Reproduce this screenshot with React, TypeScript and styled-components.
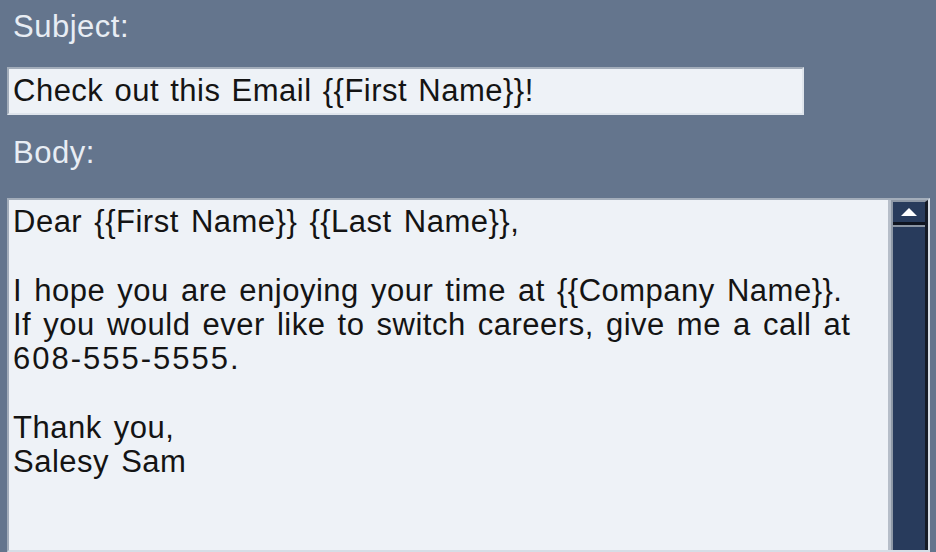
import React from "react";
import styled, { createGlobalStyle } from "styled-components";

const Global = createGlobalStyle`
  html, body { margin: 0; padding: 0; }
  body {
    width: 936px;
    height: 552px;
    overflow: hidden;
    background: #64758d;
    font-family: "Liberation Sans", Arial, sans-serif;
  }
`;

const Page = styled.div`
  width: 936px;
  height: 552px;
  overflow: hidden;
  background: #64758d;
  padding: 10px 6px 0 6px;
  box-sizing: border-box;
  display: flex;
  flex-direction: column;
`;

const Label = styled.div<{ $gap: number }>`
  color: #e8edf4;
  font-size: 31px;
  line-height: 34px;
  letter-spacing: 0.5px;
  padding-left: 7px;
  margin-bottom: ${(p) => p.$gap}px;
`;

const SubjectBox = styled.div`
  width: 797px;
  height: 48px;
  box-sizing: border-box;
  margin-left: 1px;
  margin-bottom: 21px;
  background: #eef2f7;
  border-style: solid;
  border-width: 2px;
  border-color: #a3adba #dfe5ec #dfe5ec #a3adba;
  color: #141414;
  font-size: 31px;
  line-height: 44px;
  letter-spacing: 0.5px;
  word-spacing: 2px;
  padding-left: 4px;
  white-space: nowrap;
`;

const BodyFrame = styled.div`
  width: 923px;
  height: 380px;
  margin-left: 1px;
  box-sizing: border-box;
  display: flex;
  border-style: solid;
  border-width: 2px;
  border-color: #a3adba #d6dde6 #d6dde6 #a3adba;
  background: #eef2f7;
`;

const BodyText = styled.div`
  flex: 1;
  padding: 5px 4px 0 4px;
  color: #141414;
  font-size: 31px;
  line-height: 34.3px;
  letter-spacing: 0.5px;
  word-spacing: 3px;
  white-space: pre-wrap;
  border-right: 3px solid #b6bec9;
`;

const Phone = styled.span`
  white-space: nowrap;
  letter-spacing: 2px;
`;

const ScrollBar = styled.div`
  width: 32px;
  display: flex;
  flex-direction: column;
  background: #283b5c;
  border-top: 2px solid #8e98a6;
  border-left: 2px solid #8e98a6;
  border-right: 3px solid #141a26;
`;

const ArrowButton = styled.div`
  height: 20px;
  display: flex;
  align-items: center;
  justify-content: center;
  background: #283b5c;
  border-bottom: 3px solid #0f1420;
`;

const TrackEdge = styled.div`
  height: 2px;
  background: #8b95a3;
`;

const Track = styled.div`
  flex: 1;
  background: #283b5c;
`;

export default function App() {
  return (
    <>
      <Global />
      <Page>
        <Label $gap={23}>Subject:</Label>
        <SubjectBox>Check out this Email {"{{First Name}}"}!</SubjectBox>
        <Label $gap={28}>Body:</Label>
        <BodyFrame>
          <BodyText>
            {"Dear {{First Name}} {{Last Name}},\n\nI hope you are enjoying your time at {{Company Name}}.\nIf you would ever like to switch careers, give me a call at "}
            <Phone>608-555-5555.</Phone>
            {"\n\nThank you,\nSalesy Sam"}
          </BodyText>
          <ScrollBar>
            <ArrowButton>
              <svg width="16" height="8" viewBox="0 0 16 8">
                <polygon points="8,0 16,8 0,8" fill="#ffffff" />
              </svg>
            </ArrowButton>
            <TrackEdge />
            <Track />
          </ScrollBar>
        </BodyFrame>
      </Page>
    </>
  );
}
